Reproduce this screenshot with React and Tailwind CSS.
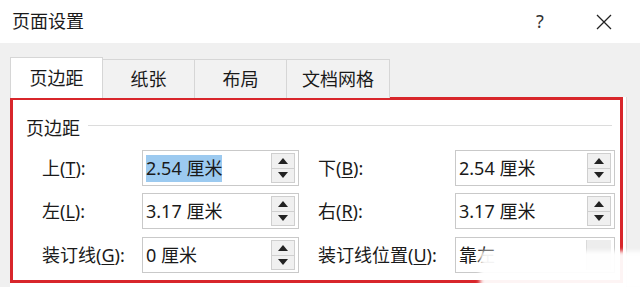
import React from 'react';

function Spinner() {
  return (
    <div className="flex flex-col w-[24px] h-[30px] my-auto mr-[3px] border border-[#cfcfcf] bg-[#f0f0f0]">
      <div className="flex-1 flex items-center justify-center border-b border-[#cfcfcf]">
        <svg width="10" height="6" viewBox="0 0 10 6"><path d="M0 6 L5 0 L10 6 Z" fill="#222" /></svg>
      </div>
      <div className="flex-1 flex items-center justify-center">
        <svg width="10" height="6" viewBox="0 0 10 6"><path d="M0 0 L10 0 L5 6 Z" fill="#222" /></svg>
      </div>
    </div>
  );
}

function Field({ value, width, selected, dropdown }) {
  return (
    <div className={`flex h-[36px] bg-white border border-[#c9c9c9] ${width}`}>
      <div className="flex-1 flex items-center pl-[3px]">
        <span className={`text-[18px] leading-[27px] text-[#1a1a1a] ${selected ? 'bg-[#9ccaf0]' : ''}`}>{value}</span>
      </div>
      {dropdown ? (
        <div className="w-[25px] mr-[3px] my-[2px] bg-[#ededed] border-l border-[#dadada]" />
      ) : (
        <Spinner />
      )}
    </div>
  );
}

function Label({ text, hot, tail, width }) {
  return (
    <div className={`text-[18px] text-[#1a1a1a] ${width}`}>
      {text}(<u className="underline-offset-2">{hot}</u>){tail}
    </div>
  );
}

function Row({ left, right, className }) {
  return (
    <div className={`flex items-center pl-[29px] ${className}`}>
      <Label {...left.label} width="w-[100px]" />
      <Field {...left.field} width="w-[157px]" />
      <div className="w-[19px]" />
      <Label {...right.label} width="w-[137px]" />
      <Field {...right.field} width="w-[160px]" />
    </div>
  );
}

export default function App() {
  const tabs = ['纸张', '布局', '文档网格'];
  return (
    <div
      className="relative w-[640px] h-[287px] overflow-hidden bg-[#f0f0f0]"
      style={{ fontFamily: '"Noto Sans", "Noto Sans CJK SC", sans-serif' }}
    >
      <div className="h-[43px] bg-white flex items-center pl-[12px]">
        <div className="text-[18px] text-[#1a1a1a] flex-1">页面设置</div>
        <div className="text-[18px] text-[#333] w-[20px] text-center">?</div>
        <div className="w-[68px] flex justify-center pr-[4px] ml-[22px]">
          <svg width="16" height="16" viewBox="0 0 16 16">
            <path d="M1 1 L15 15 M15 1 L1 15" stroke="#222" strokeWidth="1.3" />
          </svg>
        </div>
      </div>

      <div className="flex items-end pl-[10px] h-[55px] -mb-px">
        <div className="w-[93px] h-[41px] bg-white border border-b-0 border-[#d6d6d6] flex items-center justify-center text-[18px] text-[#1a1a1a] relative z-10">
          页边距
        </div>
        {tabs.map((t, i) => (
          <div
            key={t}
            className={`h-[39px] border border-l-0 border-b-0 border-[#d6d6d6] bg-[#f2f2f2] flex items-center justify-center text-[18px] text-[#1a1a1a] ${i === 2 ? 'w-[103px]' : 'w-[92px]'}`}
          >
            {t}
          </div>
        ))}
      </div>

      <div className="ml-[10px] w-[617px] h-[191px] bg-white border-r border-[#dcdcdc]">
        <div className="w-[613px] h-[186px] border-[3px] border-[#d8262b]">
          <div className="flex items-center pl-[13px] pr-[8px] mt-[19px] h-[18px]">
            <span className="text-[18px] text-[#1a1a1a] leading-[18px]">页边距</span>
            <div className="flex-1 h-px bg-[#dcdcdc] ml-[8px] -mt-[6px]" />
          </div>
          <Row
            className="mt-[13px]"
            left={{ label: { text: '上', hot: 'T', tail: ':' }, field: { value: '2.54 厘米', selected: true } }}
            right={{ label: { text: '下', hot: 'B', tail: ':' }, field: { value: '2.54 厘米' } }}
          />
          <Row
            className="mt-[7px]"
            left={{ label: { text: '左', hot: 'L', tail: ':' }, field: { value: '3.17 厘米' } }}
            right={{ label: { text: '右', hot: 'R', tail: ':' }, field: { value: '3.17 厘米' } }}
          />
          <Row
            className="mt-[8px]"
            left={{ label: { text: '装订线', hot: 'G', tail: ':' }, field: { value: '0 厘米' } }}
            right={{ label: { text: '装订线位置', hot: 'U', tail: ':' }, field: { value: '靠左', dropdown: true } }}
          />
        </div>
      </div>

      <div className="absolute left-[480px] top-[251px] w-[170px] h-[40px] bg-white/95 blur-[2px]" />
    </div>
  );
}
